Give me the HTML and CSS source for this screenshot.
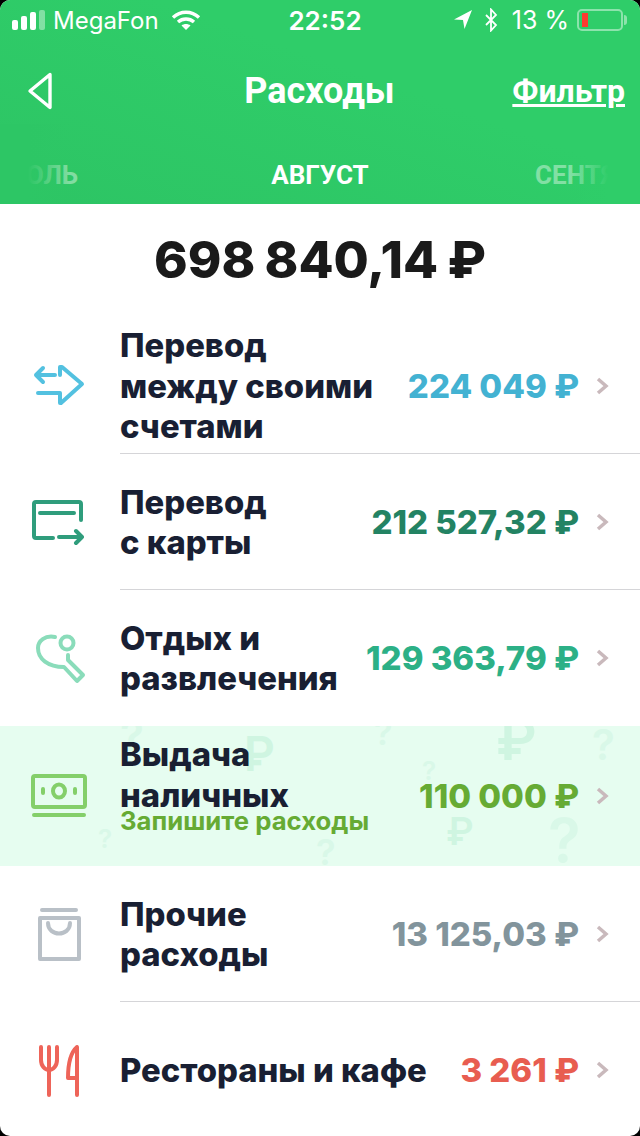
FILE: index.html
```html
<!DOCTYPE html>
<html lang="ru">
<head>
    <meta charset="UTF-8">
    <meta name="viewport" content="width=device-width, initial-scale=1.0">
    <title>Расходы</title>
    <link rel="stylesheet" href="styles.css">
</head>
<body>
    <div class="screen">
        <header class="header">
            <div class="status">
                <div class="status-left">
                    <div class="signal"><i></i><i></i><i></i><i class="off"></i></div>
                    <span>MegaFon</span>
                    <svg class="wifi" width="30" height="22" viewBox="0 0 30 22"><path d="M2 8.500C9.500 1.500 20.500 1.500 28 8.500M7 13C11.500 9 18.500 9 23 13" fill="none" stroke="#fff" stroke-width="3.400"/><path d="M15 21l-4.500-4.500C13 14.500 17 14.500 19.500 16.500z" fill="#fff"/></svg>
                </div>
                <div class="status-time">22:52</div>
                <div class="status-right">
                    <svg width="20" height="22" viewBox="0 0 20 22"><path d="M19 1L1 10.500l9 .5 1.500 9z" fill="#fff"/></svg>
                    <svg class="bt" width="14" height="24" viewBox="0 0 14 24"><path d="M2 7l10 10-5 5.500V1.500l5 5.500L2 17" fill="none" stroke="#fff" stroke-width="1.800"/></svg>
                    <span class="percent">13 %</span>
                    <div class="battery"><i></i></div>
                </div>
            </div>
            <div class="nav">
                <svg class="back" width="28" height="38" viewBox="0 0 28 38"><path d="M24 2.500L4 19l20 16.500z" fill="none" stroke="#fff" stroke-width="3.400" stroke-linejoin="round"/></svg>
                <h1>Расходы</h1>
                <a class="filter">Фильтр</a>
            </div>
            <div class="months">
                <span class="month side left">ИЮЛЬ</span>
                <span class="month">АВГУСТ</span>
                <span class="month side right">СЕНТЯБРЬ</span>
            </div>
        </header>

        <div class="total">698 840,14 ₽</div>

        <ul class="rows">
            <li class="row line">
                <svg class="icon" width="64" height="64" viewBox="0 0 64 64" stroke="#53c1e0"><path d="M29 21H10M17 14l-7 7 7 7M12 39h22v10h1l21-19-20-17h-2v8"/></svg>
                <div class="name">Перевод<br>между своими<br>счетами</div>
                <div class="sum blue">224 049 ₽</div>
                <svg class="chev" width="14" height="20" viewBox="0 0 14 20"><path d="M3 3l8 7-8 7"/></svg>
            </li>
            <li class="row line">
                <svg class="icon" width="64" height="64" viewBox="0 0 64 64" stroke="#2f9d7c"><path d="M55 30V14a2 2 0 0 0-2-2H10a2 2 0 0 0-2 2v32a2 2 0 0 0 2 2h17M14 23h34M33 47h23M50 41l6 6-6 6"/></svg>
                <div class="name">Перевод<br>с карты</div>
                <div class="sum green">212 527,32 ₽</div>
                <svg class="chev" width="14" height="20" viewBox="0 0 14 20"><path d="M3 3l8 7-8 7"/></svg>
            </li>
            <li class="row">
                <svg class="icon" width="64" height="64" viewBox="0 0 64 64" stroke="#8adcba"><path d="M29 11C19 9 12 15 12 22c0 11 10 19 26 19l13 14 6-6-15-15v-5"/><circle cx="41" cy="17" r="6.500"/></svg>
                <div class="name">Отдых и<br>развлечения</div>
                <div class="sum mint">129 363,79 ₽</div>
                <svg class="chev" width="14" height="20" viewBox="0 0 14 20"><path d="M3 3l8 7-8 7"/></svg>
            </li>
            <li class="row promo">
                <span class="bg q" style="left:120px;top:-12px;font-size:44px">?</span>
                <span class="bg" style="left:240px;top:4px;font-size:48px">₽</span>
                <span class="bg q" style="left:374px;top:-10px;font-size:34px">?</span>
                <span class="bg" style="left:496px;top:-14px;font-size:56px">₽</span>
                <span class="bg q" style="left:592px;top:-2px;font-size:42px">?</span>
                <span class="bg q" style="left:422px;top:32px;font-size:26px">?</span>
                <span class="bg" style="left:446px;top:86px;font-size:38px">₽</span>
                <span class="bg q" style="left:548px;top:84px;font-size:60px">?</span>
                <span class="bg q" style="left:98px;top:100px;font-size:26px">?</span>
                <span class="bg q" style="left:316px;top:108px;font-size:36px">?</span>
                <svg class="icon" width="64" height="64" viewBox="0 0 64 64" stroke="#84cf6a"><rect x="7" y="12" width="52" height="31" rx="2"/><ellipse cx="33" cy="27" rx="6" ry="6.500"/><path d="M17 25v4M49 25v4M8 51h50"/></svg>
                <div class="name promo-name">Выдача<br>наличных<div class="note">Запишите расходы</div></div>
                <div class="sum lime">110 000 ₽</div>
                <svg class="chev" width="14" height="20" viewBox="0 0 14 20"><path d="M3 3l8 7-8 7"/></svg>
            </li>
            <li class="row line">
                <svg class="icon" width="64" height="64" viewBox="0 0 64 64" stroke="#b9c0c7"><path d="M16 8h34M14 16h39v41H14zM22 21c0 14 22 14 22 0"/></svg>
                <div class="name">Прочие<br>расходы</div>
                <div class="sum gray">13 125,03 ₽</div>
                <svg class="chev" width="14" height="20" viewBox="0 0 14 20"><path d="M3 3l8 7-8 7"/></svg>
            </li>
            <li class="row">
                <svg class="icon" width="64" height="64" viewBox="0 0 64 64" stroke="#ee6459"><path d="M15 9v13c0 6 4 10 8 10s8-4 8-10V9M23 9v48M51 9v48M51 40h-9c0-12 2-25 9-31"/></svg>
                <div class="name">Рестораны и кафе</div>
                <div class="sum red">3 261 ₽</div>
                <svg class="chev" width="14" height="20" viewBox="0 0 14 20"><path d="M3 3l8 7-8 7"/></svg>
            </li>
        </ul>
    </div>
</body>
</html>
```

FILE: styles.css
```css
* {
    box-sizing: border-box;
}
html, body {
    margin: 0;
    height: 100%;
    background: #000;
}
.screen {
    width: 640px;
    height: 1136px;
    background: #fff;
    border-radius: 10px;
    overflow: hidden;
    font-family: Inter, "Liberation Sans", sans-serif;
    color: #191f33;
}

/* header */
.header {
    height: 204px;
    background: linear-gradient(20deg, #2dc464, #2fcd69 60%);
    color: #fff;
    font-family: Roboto, sans-serif;
}
.status {
    height: 40px;
    padding: 0 12px;
    display: grid;
    grid-template-columns: 1fr auto 1fr;
    align-items: center;
    font-family: Inter, sans-serif;
    font-size: 24px;
}
.status-left, .status-right {
    display: flex;
    align-items: center;
}
.status-left span {
    margin-left: 8px;
}
.wifi {
    margin-left: 12px;
}
.status-time {
    font-size: 26px;
    font-weight: 600;
    padding-left: 10px;
}
.status-right {
    justify-content: flex-end;
}
.bt {
    margin-left: 11px;
}
.percent {
    margin-left: 14px;
    font-size: 25px;
}
.signal {
    display: flex;
    align-items: flex-end;
    gap: 3px;
}
.signal i {
    width: 6px;
    height: 10px;
    border-radius: 2px;
    background: #fff;
}
.signal i:nth-child(2) {
    height: 14px;
}
.signal i:nth-child(3) {
    height: 18px;
}
.signal i:nth-child(4) {
    height: 20px;
}
.signal .off {
    background: rgba(255, 255, 255, 0.4);
}
.battery {
    width: 46px;
    height: 22px;
    padding: 2px 3px;
    border: 2px solid rgba(255, 255, 255, 0.45);
    border-radius: 5px;
    margin: 0 5px 0 8px;
    position: relative;
}
.battery::after {
    content: "";
    position: absolute;
    right: -6px;
    top: 4px;
    width: 3px;
    height: 10px;
    border-radius: 0 3px 3px 0;
    background: rgba(255, 255, 255, 0.45);
}
.battery i {
    display: block;
    width: 6px;
    height: 100%;
    background: #ff3b30;
}
.nav {
    height: 84px;
    padding: 18px 15px 0 14px;
    display: grid;
    grid-template-columns: 1fr auto 1fr;
    align-items: center;
}
.nav h1 {
    margin: 0;
    font-size: 36px;
    font-weight: 700;
}
.back {
    display: block;
    margin-left: 12px;
}
.filter {
    justify-self: end;
    font-size: 32px;
    font-weight: 700;
    text-decoration: underline;
}
.months {
    height: 80px;
    padding-top: 22px;
    position: relative;
    overflow: hidden;
    display: flex;
    align-items: center;
    justify-content: center;
    font-size: 26px;
    font-weight: 700;
}
.side {
    position: absolute;
    opacity: 0.4;
}
.side.left {
    right: 562px;
}
.side.right {
    left: 535px;
}
.months::before, .months::after {
    content: "";
    position: absolute;
    top: 0;
    bottom: 0;
    width: 70px;
    z-index: 1;
}
.months::before {
    left: 0;
    background: linear-gradient(90deg, #2dc665 40%, rgba(45, 198, 101, 0));
}
.months::after {
    right: 0;
    background: linear-gradient(270deg, #2fcd69 45%, rgba(47, 205, 105, 0));
}

/* total */
.total {
    height: 114px;
    padding-bottom: 4px;
    display: flex;
    align-items: center;
    justify-content: center;
    font-size: 51px;
    font-weight: 800;
    word-spacing: -2px;
    color: #1a1a1a;
}

/* rows */
.rows {
    list-style: none;
    margin: 0;
    padding: 0;
}
.row {
    height: 136px;
    position: relative;
    display: flex;
    align-items: center;
    padding: 0 31px 0 26px;
}
.row.line::after {
    content: "";
    position: absolute;
    left: 120px;
    right: 0;
    bottom: 0;
    height: 1px;
    background: #d5d5d8;
}
.icon {
    flex: none;
    width: 64px;
    height: 64px;
    fill: none;
    stroke-width: 4;
    stroke-linecap: round;
    stroke-linejoin: round;
    position: relative;
}
.name {
    margin-left: 30px;
    flex: 1;
    font-size: 32.800px;
    line-height: 40.500px;
    font-weight: 800;
    white-space: nowrap;
    position: relative;
}
.sum {
    font-size: 33px;
    font-weight: 800;
    white-space: nowrap;
    position: relative;
}
.chev {
    margin-left: 16px;
    fill: none;
    stroke: #c9b9bc;
    stroke-width: 3.500;
    position: relative;
}
.blue { color: #43b2d2; }
.green { color: #238363; }
.mint { color: #2cb086; }
.lime { color: #66ab34; }
.gray { color: #82949c; }
.red { color: #e85d50; }

/* highlighted row */
.promo {
    height: 140px;
    background: #e6fdf0;
    overflow: hidden;
}
.promo-name {
    margin-bottom: 25px;
}
.bg {
    position: absolute;
    color: #cff5e1;
    font-weight: 600;
    line-height: 1;
}
.bg.q {
    color: #d9f8e8;
}
.note {
    font-size: 25.700px;
    line-height: 24px;
    font-weight: 700;
    color: #66ab34;
    margin-top: -6px;
}
```
